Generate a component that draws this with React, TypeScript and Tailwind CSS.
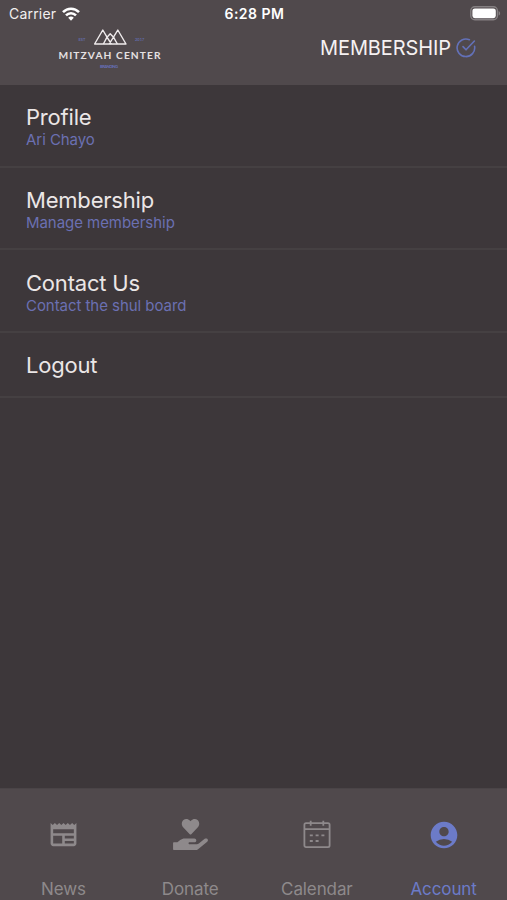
import React from 'react';
import { FaHandHoldingHeart } from 'react-icons/fa';
import { MdAccountCircle, MdNewspaper } from 'react-icons/md';

const menuItems = [
  { title: 'Profile', subtitle: 'Ari Chayo' },
  { title: 'Membership', subtitle: 'Manage membership' },
  { title: 'Contact Us', subtitle: 'Contact the shul board' },
  { title: 'Logout', subtitle: '' },
];

function WifiIcon() {
  return (
    <svg width="18" height="14" viewBox="0 0 18 14" fill="none" stroke="#fff" strokeWidth="2.6">
      <path d="M1 5.2C5.5 .6 12.5.6 17 5.2" />
      <path d="M4 8.4c2.9-2.9 7.1-2.9 10 0" />
      <path d="M6.2 10.8c1.7-1.6 3.9-1.6 5.6 0L9 13.8z" fill="#fff" stroke="none" />
    </svg>
  );
}

function BatteryIcon() {
  return (
    <svg width="31" height="15" viewBox="0 0 31 15">
      <rect x=".8" y=".8" width="26.6" height="13" rx="4" fill="none" stroke="#858082" strokeWidth="1.4" />
      <rect x="2.4" y="2.4" width="23.4" height="9.8" rx="2.4" fill="#fff" />
      <path d="M28.6 5c2 .8 2 3.8 0 4.6z" fill="#858082" />
    </svg>
  );
}

function CheckIcon() {
  return (
    <svg width="20" height="20" viewBox="0 0 20 20" fill="none" stroke="#6371b8" strokeWidth="1.6" strokeLinecap="round" strokeLinejoin="round">
      <path d="M18.6 8.4A8.8 8.8 0 1 1 13.4 1.7" />
      <path d="M7 8.6l3 3.2 8.4-8.8" />
    </svg>
  );
}

function CalendarIcon() {
  return (
    <svg width="28" height="29" viewBox="0 0 28 29" fill="none" stroke="#8e898b" strokeWidth="1.8">
      <rect x="1.4" y="3.2" width="25.2" height="24" rx="1.6" />
      <path d="M1.4 9.2h25.2M7.7 .8v5M20.3 .8v5" />
      <path d="M6.8 15.4h3M12.6 15.4h3M18.4 15.4h3M6.8 21h3M12.6 21h3" />
    </svg>
  );
}

function Logo() {
  return (
    <svg width="104" height="44" viewBox="0 0 104 44" fontFamily="Lato, 'Liberation Sans', sans-serif">
      <g fill="none" stroke="#efebec" strokeWidth="1.4" strokeLinejoin="round">
        <path d="M50 10.2L45.8 3 37.6 17H69L60.8 3l-4.3 7.2" />
        <path d="M50 10.2l3.2-3.4 3.3 3.4L60.4 17M50 10.2L46.4 17M50 10.2l4.4 6.8M56.5 10.2L52.2 17" />
      </g>
      <text x="21.5" y="14" fontSize="4" fontWeight="700" fill="#626aa6">EST</text>
      <text x="78" y="13.6" fontSize="4" fontWeight="700" fill="#626aa6">2017</text>
      <text x="1.5" y="31.8" fontSize="10.2" fontWeight="700" fill="#e6e1e2" textLength="102">MITZVAH CENTER</text>
      <text x="43" y="41" fontSize="4.2" fontWeight="700" fill="#6670b8" textLength="18">BRANDING</text>
    </svg>
  );
}

const tabs = [
  { label: 'News', icon: <MdNewspaper size={31} />, active: false },
  { label: 'Donate', icon: <FaHandHoldingHeart className="h-[31px] w-[35px]" />, active: false },
  { label: 'Calendar', icon: <CalendarIcon />, active: false },
  { label: 'Account', icon: <MdAccountCircle size={32} />, active: true },
];

export default function App() {
  return (
    <div className="flex h-[900px] w-[507px] flex-col overflow-hidden bg-[#3d373a] font-[Inter,'Liberation_Sans',sans-serif]">
      <header className="h-[85px] shrink-0 bg-[#50494c] text-white">
        <div className="grid h-[27px] grid-cols-3 items-center pl-[8px] pr-[6px]">
          <div className="flex items-center gap-[6px] pl-px text-sm text-[#f2efef]">
            <span className="tracking-[0.2px]">Carrier</span>
            <WifiIcon />
          </div>
          <div className="text-center text-sm font-semibold tracking-[0.5px]">6:28 PM</div>
          <div className="flex justify-end">
            <BatteryIcon />
          </div>
        </div>
        <div className="flex items-start justify-between pl-[57px] pr-[31px]">
          <Logo />
          <div className="mt-[6px] flex items-center gap-[5px]">
            <span className="text-xl leading-[30px] tracking-[-0.1px] text-[#f5f1f2]">MEMBERSHIP</span>
            <CheckIcon />
          </div>
        </div>
      </header>

      <main className="flex-1">
        {menuItems.map((item) => (
          <div
            key={item.title}
            className={`border-b-2 border-[#454042] pl-[26px] pt-[18.4px] ${item.subtitle ? 'h-[82.7px]' : 'h-[65px]'}`}
          >
            <div className="text-[22px] leading-[28px] tracking-[-0.2px] text-[#ebe6e6]">{item.title}</div>
            {item.subtitle && (
              <div className="text-[15px] leading-[17px] tracking-[-0.05px] text-[#6b70b2]">{item.subtitle}</div>
            )}
          </div>
        ))}
      </main>

      <nav className="grid h-[112px] shrink-0 grid-cols-4 border-t border-[#4a4447] bg-[#50494c]">
        {tabs.map((tab) => (
          <div key={tab.label} className={`flex flex-col items-center pt-[27px] ${tab.active ? 'text-[#6c7bc8]' : 'text-[#8e898b]'}`}>
            <div className="flex h-[37px] items-center">{tab.icon}</div>
            <span className="mt-[24px] text-[17px] leading-6 tracking-[-0.1px]">{tab.label}</span>
          </div>
        ))}
      </nav>
    </div>
  );
}
